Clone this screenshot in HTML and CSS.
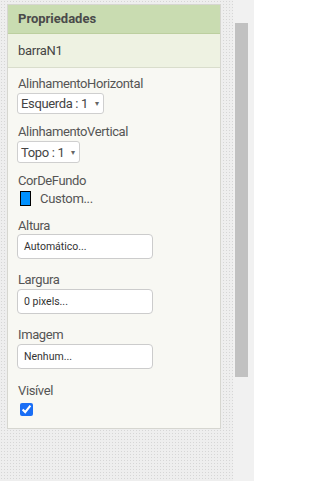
FILE: index.html
```html
<!DOCTYPE html>
<html lang="pt">
<head>
<meta charset="utf-8">
<title>Propriedades</title>
<link rel="stylesheet" href="styles.css">
</head>
<body>
<div class="app">
  <div class="canvas">
    <div class="panel">
      <div class="panel-head">Propriedades</div>
      <div class="panel-sub">barraN1</div>
      <div class="props">
        <div class="prop p1">
          <div class="prop-label">AlinhamentoHorizontal</div>
          <div class="select s1"><span>Esquerda : 1</span><span class="caret">&#9662;</span></div>
        </div>
        <div class="prop p2">
          <div class="prop-label">AlinhamentoVertical</div>
          <div class="select s2"><span>Topo : 1</span><span class="caret">&#9662;</span></div>
        </div>
        <div class="prop p3">
          <div class="prop-label">CorDeFundo</div>
          <div class="color-row"><span class="swatch"></span><span class="color-name">Custom...</span></div>
        </div>
        <div class="prop p4">
          <div class="prop-label">Altura</div>
          <div class="textbox">Automático...</div>
        </div>
        <div class="prop p5">
          <div class="prop-label">Largura</div>
          <div class="textbox">0 pixels...</div>
        </div>
        <div class="prop p6">
          <div class="prop-label">Imagem</div>
          <div class="textbox">Nenhum...</div>
        </div>
        <div class="prop p7">
          <div class="prop-label">Visível</div>
          <div class="check-row"><input class="check" type="checkbox" checked></div>
        </div>
      </div>
    </div>
  </div>
  <div class="scroll"><div class="thumb"></div></div>
</div>
</body>
</html>
```
FILE: styles.css
```css
html, body {
  margin: 0;
  padding: 0;
}
body {
  font-family: Roboto, "Liberation Sans", sans-serif;
  font-size: 13px;
  color: #555;
}
.app {
  display: flex;
  height: 481px;
  width: 254px;
}
.canvas {
  width: 233px;
  height: 481px;
  box-sizing: border-box;
  padding: 4px 0 0 7px;
  background-color: #eeeeee;
  background-image: radial-gradient(#d6d6d6 0.8px, transparent 0.9px);
  background-size: 3px 3px;
}
.scroll {
  width: 21px;
  height: 481px;
  box-sizing: border-box;
  padding: 23px 0 0 2px;
  background: #f1f1f1;
}
.thumb {
  width: 13px;
  height: 354px;
  background: #c1c1c1;
}
.panel {
  width: 214px;
  box-sizing: border-box;
  border: 1px solid #d6d6d0;
  background: #f8f8f3;
}
.panel-head {
  height: 28px;
  line-height: 28px;
  padding-left: 10px;
  background: #c9dcb1;
  font-weight: bold;
  color: #4a4a4a;
  border-bottom: 1px solid #bccf9f;
}
.panel-sub {
  height: 33px;
  line-height: 33px;
  padding-left: 10px;
  background: #eef2e2;
  color: #454545;
  font-size: 13px;
  letter-spacing: -0.3px;
  border-bottom: 1px solid #d9ddcc;
}
.props {
  padding: 8px 9px 12px 9px;
}
.prop-label {
  height: 16px;
  line-height: 16px;
  padding-left: 1px;
  color: #555;
  letter-spacing: -0.38px;
}
.p2 { margin-top: 10px; }
.p3 { margin-top: 10px; }
.p4 { margin-top: 12px; }
.p5, .p6 { margin-top: 13px; }
.p7 { margin-top: 14px; }

.select {
  display: inline-flex;
  align-items: center;
  margin-top: 1px;
  height: 21px;
  box-sizing: border-box;
  border: 1px solid #cfcfcf;
  border-radius: 3px;
  background: #fff;
  padding: 0 4px 0 3px;
  color: #444;
  font-size: 13px;
  letter-spacing: -0.35px;
}
.s2 { margin-top: 1px; height: 22px; }
.caret {
  font-size: 8px;
  color: #666;
  margin-left: 7px;
}
.color-row {
  display: flex;
  align-items: center;
  margin-top: 2px;
  height: 15px;
  padding-left: 3px;
}
.swatch {
  width: 11px;
  height: 15px;
  box-sizing: border-box;
  border: 1px solid #000;
  background: #0091ff;
}
.color-name {
  margin-left: 9px;
  color: #555;
  letter-spacing: -0.3px;
}
.textbox {
  width: 136px;
  height: 25px;
  box-sizing: border-box;
  margin-top: 0;
  border: 1px solid #cccccc;
  border-radius: 4px;
  background: #fff;
  padding-left: 6px;
  line-height: 23px;
  font-size: 10.5px;
  color: #333;
}
.p5 .textbox, .p6 .textbox { margin-top: 1px; }
.check-row {
  margin-top: 4px;
  padding-left: 3px;
  height: 13px;
}
.check {
  display: block;
  margin: 0;
  width: 13px;
  height: 13px;
  accent-color: #1a6ef5;
}
```
